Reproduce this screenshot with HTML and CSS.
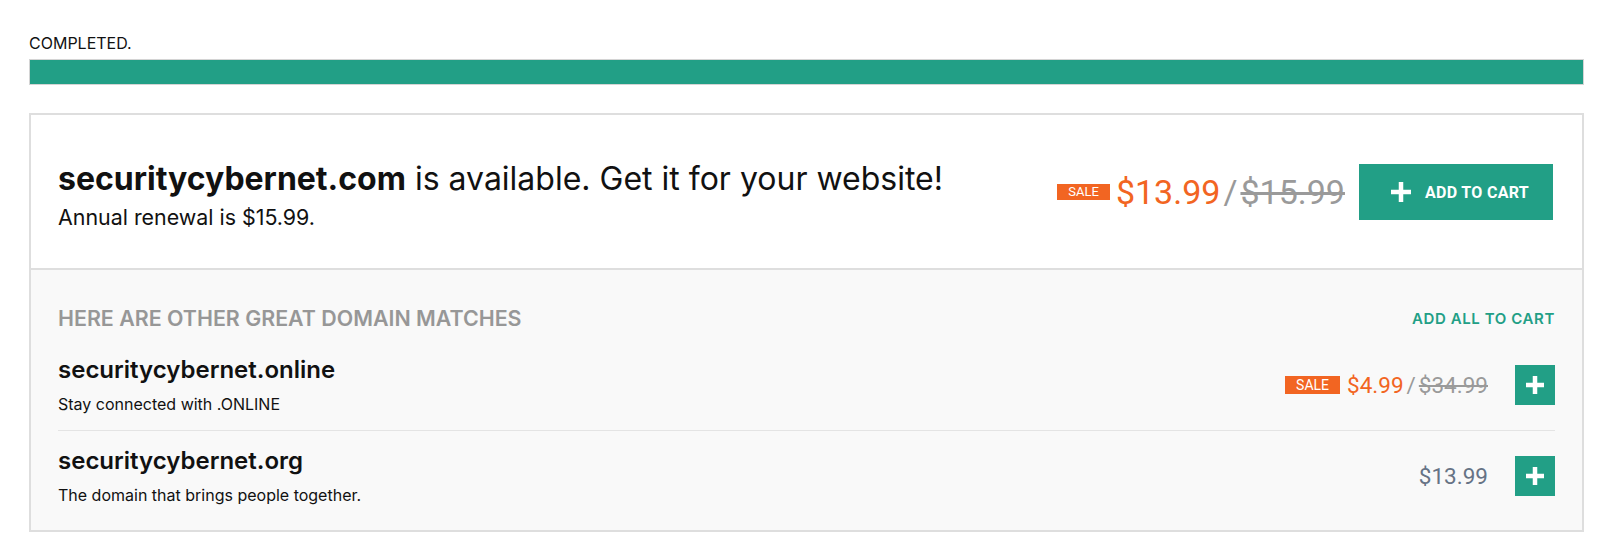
FILE: index.html
```html
<!DOCTYPE html>
<html lang="en">
<head>
  <meta charset="UTF-8">
  <title>Domain Search</title>
  <link rel="stylesheet" href="styles.css">
</head>
<body>
  <div class="page">
    <p class="status">COMPLETED.</p>
    <div class="progress"><div class="progress-fill"></div></div>

    <div class="result">
      <div class="result-main">
        <div class="result-text">
          <h1><b>securitycybernet.com</b> is available. Get it for your website!</h1>
          <p>Annual renewal is $15.99.</p>
        </div>
        <div class="result-buy">
          <div class="price price-lg">
            <span class="sale">SALE</span>
            <span class="now">$13.99</span><span class="sep">/</span><s class="was">$15.99</s>
          </div>
          <button class="btn-cart">
            <svg width="22" height="22" viewBox="0 0 22 22"><path d="M11 1v20M1 11h20" stroke="#fff" stroke-width="4.5"/></svg>
            ADD TO CART
          </button>
        </div>
      </div>

      <div class="matches">
        <div class="matches-head">
          <h2>HERE ARE OTHER GREAT DOMAIN MATCHES</h2>
          <a href="#" class="add-all">ADD ALL TO CART</a>
        </div>

        <div class="match">
          <div class="match-text">
            <h3>securitycybernet.online</h3>
            <p>Stay connected with .ONLINE</p>
          </div>
          <div class="price price-sm">
            <span class="sale">SALE</span>
            <span class="now">$4.99</span><span class="sep">/</span><s class="was">$34.99</s>
          </div>
          <button class="btn-add"><svg width="20" height="20" viewBox="0 0 20 20"><path d="M10 1v18M1 10h18" stroke="#fff" stroke-width="4.5"/></svg></button>
        </div>

        <div class="match">
          <div class="match-text">
            <h3>securitycybernet.org</h3>
            <p>The domain that brings people together.</p>
          </div>
          <div class="price price-sm">
            <span class="regular">$13.99</span>
          </div>
          <button class="btn-add"><svg width="20" height="20" viewBox="0 0 20 20"><path d="M10 1v18M1 10h18" stroke="#fff" stroke-width="4.5"/></svg></button>
        </div>
      </div>
    </div>
  </div>
</body>
</html>
```

FILE: styles.css
```css
body {
  margin: 0;
  padding: 0;
  background: #fff;
  color: #111;
  font-family: Inter, "Liberation Sans", sans-serif;
}

.page {
  padding: 34px 16px 0 29px;
}

.status {
  margin: 0 0 7px;
  font-size: 16px;
  line-height: 18px;
  color: #111;
}

.progress {
  height: 24px;
  border: 1px solid #d4d4d4;
  background: #eee;
}

.progress-fill {
  height: 100%;
  width: 100%;
  background: #229f86;
}

.result {
  margin-top: 28px;
  border: 2px solid #dedede;
}

.result-main {
  display: flex;
  align-items: flex-start;
  justify-content: space-between;
  padding: 45px 29px 38px 27px;
  border-bottom: 2px solid #dedede;
}

.result-text h1 {
  margin: 0;
  font-size: 32px;
  line-height: 38px;
  font-weight: 400;
}

.result-text h1 b {
  font-weight: 700;
}

.result-text p {
  margin: 6px 0 0;
  font-size: 21.4px;
  line-height: 26px;
}

.result-buy {
  display: flex;
  align-items: center;
  gap: 14px;
  margin-top: 4px;
}

.price {
  display: flex;
  align-items: center;
  font-family: Roboto, "Liberation Sans", sans-serif;
}

.sale {
  background: #f26522;
  color: #fff;
  text-transform: uppercase;
}

.now {
  color: #f26522;
}

.sep {
  color: #999;
  margin: 0 3px;
}

.was {
  color: #9a9a9a;
}

.price-lg .sale {
  font-size: 13px;
  line-height: 16px;
  padding: 0 11px;
  margin-right: 6px;
}

.price-lg .now,
.price-lg .sep,
.price-lg .was {
  font-size: 34px;
}

.btn-cart {
  display: flex;
  align-items: center;
  gap: 13px;
  height: 56px;
  padding: 0 24px 0 31px;
  border: none;
  background: #229f86;
  color: #fff;
  font-family: Roboto, "Liberation Sans", sans-serif;
  font-size: 16px;
  font-weight: 700;
  letter-spacing: .3px;
}

.matches {
  background: #f9f9f9;
  padding: 35px 27px 9px 27px;
}

.matches-head {
  display: flex;
  justify-content: space-between;
  align-items: center;
}

.matches-head h2 {
  margin: 0;
  font-size: 21.4px;
  line-height: 26px;
  font-weight: 600;
  color: #979797;
}

.add-all {
  color: #229f86;
  font-size: 15px;
  font-weight: 600;
  letter-spacing: .6px;
  text-decoration: none;
}

.match {
  display: flex;
  align-items: center;
  padding: 15px 0;
}

.matches-head + .match {
  padding-top: 24px;
}

.match + .match {
  border-top: 1px solid #e4e4e4;
}

.match-text {
  flex: 1;
}

.match-text h3 {
  margin: 0;
  font-size: 24px;
  line-height: 30px;
  font-weight: 600;
}

.match-text p {
  margin: 8px 0 0;
  font-size: 16px;
  line-height: 22px;
}

.price-sm .sale {
  font-size: 14px;
  line-height: 18px;
  padding: 0 11px;
  margin-right: 7px;
}

.price-sm .now,
.price-sm .sep,
.price-sm .was {
  font-size: 22.5px;
}

.price-sm .regular {
  font-size: 22.5px;
  color: #667385;
}

.btn-add {
  display: flex;
  align-items: center;
  justify-content: center;
  width: 40px;
  height: 40px;
  margin-left: 27px;
  padding: 0;
  border: none;
  background: #229f86;
}
```
